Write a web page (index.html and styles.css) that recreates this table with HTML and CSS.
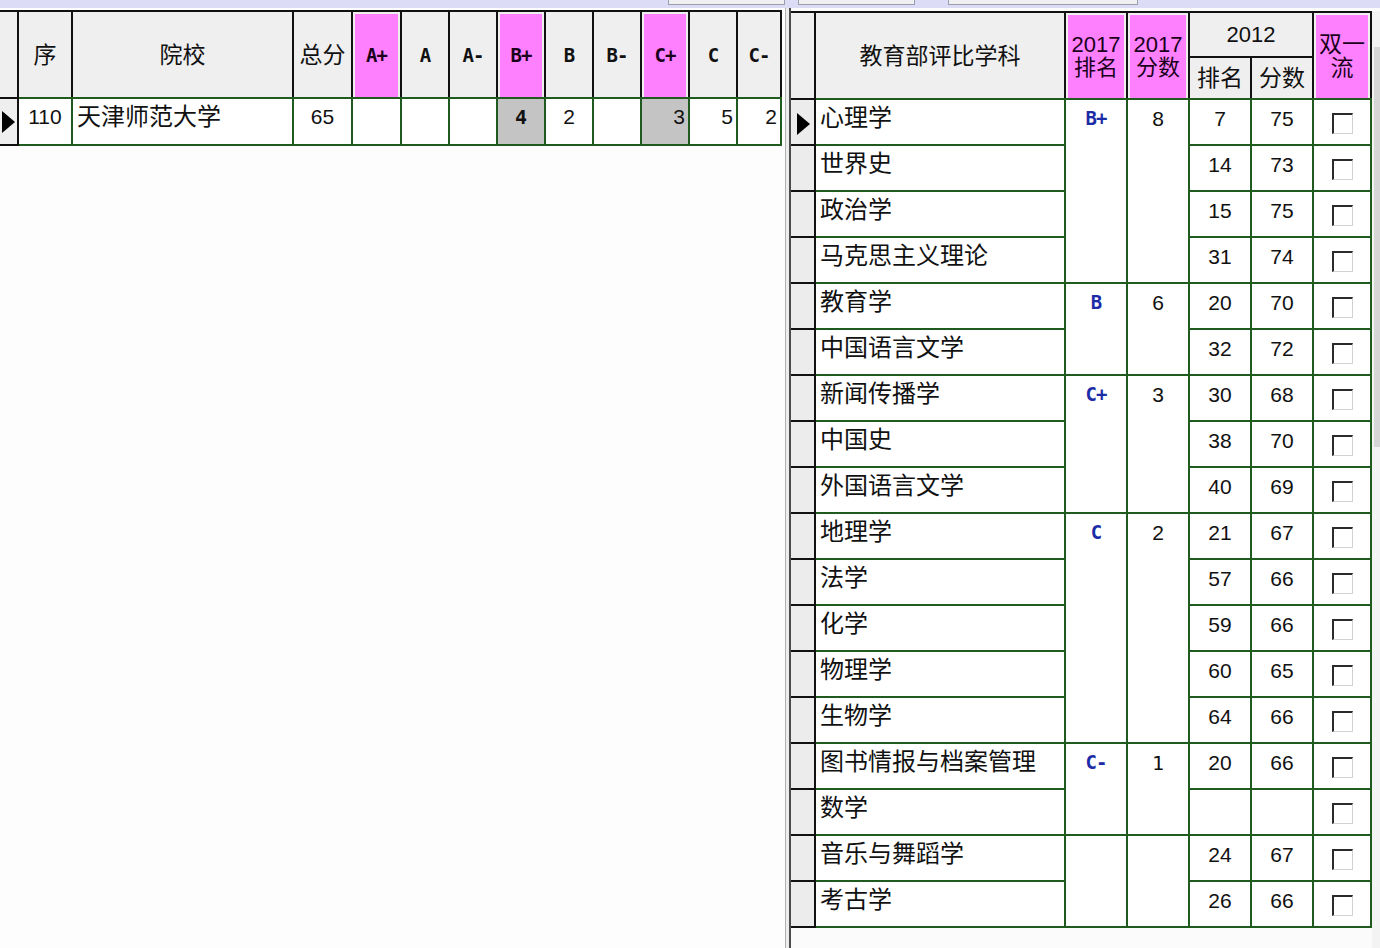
FILE: index.html
```html
<!DOCTYPE html>
<html lang="zh-CN">
<head>
<meta charset="utf-8">
<title>学科评估</title>
<link rel="stylesheet" href="styles.css">
</head>
<body>
<div class="topbar">
  <div class="tab t1"></div>
  <div class="tab t2"></div>
  <div class="tab t3"></div>
</div>
<div class="main">
  <div class="lpane">
    <div class="lhead">
      <div class="hc"></div>
      <div class="hc">序</div>
      <div class="hc">院校</div>
      <div class="hc">总分</div>
      <div class="hc pk g">A+</div>
      <div class="hc g">A</div>
      <div class="hc g">A-</div>
      <div class="hc pk g">B+</div>
      <div class="hc g">B</div>
      <div class="hc g">B-</div>
      <div class="hc pk g">C+</div>
      <div class="hc g">C</div>
      <div class="hc g">C-</div>
    </div>
    <div class="lbody">
      <div class="lind"><svg class="arrow" width="13" height="22" viewBox="0 0 13 22"><polygon points="0,0 13,11 0,22" fill="#000"/></svg></div>
      <div class="lrow">
        <div class="dc num c">110</div>
        <div class="dc txt">天津师范大学</div>
        <div class="dc num c">65</div>
        <div class="dc"></div>
        <div class="dc"></div>
        <div class="dc"></div>
        <div class="dc num c gray mono b">4</div>
        <div class="dc num c">2</div>
        <div class="dc"></div>
        <div class="dc num r gray">3</div>
        <div class="dc num r">5</div>
        <div class="dc num r">2</div>
      </div>
    </div>
  </div>
  <div class="splitter"></div>
  <div class="rpane">
    <div class="rmain">
      <div class="rhead">
        <div class="hc sp2"></div>
        <div class="hc sp2">教育部评比学科</div>
        <div class="hc pk sp2 yr">2017<br>排名</div>
        <div class="hc pk sp2 yr">2017<br>分数</div>
        <div class="hc cs2 yr">2012</div>
        <div class="hc pk sp2">双一流</div>
        <div class="hc">排名</div>
        <div class="hc">分数</div>
      </div>
      <div class="rbody">
        <div class="rind">
          <div class="ri"><svg class="arrow" width="13" height="22" viewBox="0 0 13 22"><polygon points="0,0 13,11 0,22" fill="#000"/></svg></div>
          <div class="ri"></div><div class="ri"></div><div class="ri"></div>
          <div class="ri"></div><div class="ri"></div><div class="ri"></div>
          <div class="ri"></div><div class="ri"></div><div class="ri"></div>
          <div class="ri"></div><div class="ri"></div><div class="ri"></div>
          <div class="ri"></div><div class="ri"></div><div class="ri"></div>
          <div class="ri"></div><div class="ri"></div>
        </div>
        <div class="rgrid">
          <div class="dc txt">心理学</div>
          <div class="dc grade s4">B+</div>
          <div class="dc num c s4">8</div>
          <div class="dc num c">7</div>
          <div class="dc num c">75</div>
          <div class="dc cbc"><span class="cb"></span></div>

          <div class="dc txt">世界史</div>
          <div class="dc num c">14</div>
          <div class="dc num c">73</div>
          <div class="dc cbc"><span class="cb"></span></div>

          <div class="dc txt">政治学</div>
          <div class="dc num c">15</div>
          <div class="dc num c">75</div>
          <div class="dc cbc"><span class="cb"></span></div>

          <div class="dc txt">马克思主义理论</div>
          <div class="dc num c">31</div>
          <div class="dc num c">74</div>
          <div class="dc cbc"><span class="cb"></span></div>

          <div class="dc txt">教育学</div>
          <div class="dc grade s2">B</div>
          <div class="dc num c s2">6</div>
          <div class="dc num c">20</div>
          <div class="dc num c">70</div>
          <div class="dc cbc"><span class="cb"></span></div>

          <div class="dc txt">中国语言文学</div>
          <div class="dc num c">32</div>
          <div class="dc num c">72</div>
          <div class="dc cbc"><span class="cb"></span></div>

          <div class="dc txt">新闻传播学</div>
          <div class="dc grade s3">C+</div>
          <div class="dc num c s3">3</div>
          <div class="dc num c">30</div>
          <div class="dc num c">68</div>
          <div class="dc cbc"><span class="cb"></span></div>

          <div class="dc txt">中国史</div>
          <div class="dc num c">38</div>
          <div class="dc num c">70</div>
          <div class="dc cbc"><span class="cb"></span></div>

          <div class="dc txt">外国语言文学</div>
          <div class="dc num c">40</div>
          <div class="dc num c">69</div>
          <div class="dc cbc"><span class="cb"></span></div>

          <div class="dc txt">地理学</div>
          <div class="dc grade s5">C</div>
          <div class="dc num c s5">2</div>
          <div class="dc num c">21</div>
          <div class="dc num c">67</div>
          <div class="dc cbc"><span class="cb"></span></div>

          <div class="dc txt">法学</div>
          <div class="dc num c">57</div>
          <div class="dc num c">66</div>
          <div class="dc cbc"><span class="cb"></span></div>

          <div class="dc txt">化学</div>
          <div class="dc num c">59</div>
          <div class="dc num c">66</div>
          <div class="dc cbc"><span class="cb"></span></div>

          <div class="dc txt">物理学</div>
          <div class="dc num c">60</div>
          <div class="dc num c">65</div>
          <div class="dc cbc"><span class="cb"></span></div>

          <div class="dc txt">生物学</div>
          <div class="dc num c">64</div>
          <div class="dc num c">66</div>
          <div class="dc cbc"><span class="cb"></span></div>

          <div class="dc txt">图书情报与档案管理</div>
          <div class="dc grade s2">C-</div>
          <div class="dc num c s2 mono">1</div>
          <div class="dc num c">20</div>
          <div class="dc num c">66</div>
          <div class="dc cbc"><span class="cb"></span></div>

          <div class="dc txt">数学</div>
          <div class="dc num c"></div>
          <div class="dc num c"></div>
          <div class="dc cbc"><span class="cb"></span></div>

          <div class="dc txt">音乐与舞蹈学</div>
          <div class="dc grade s2"></div>
          <div class="dc num c s2"></div>
          <div class="dc num c">24</div>
          <div class="dc num c">67</div>
          <div class="dc cbc"><span class="cb"></span></div>

          <div class="dc txt">考古学</div>
          <div class="dc num c">26</div>
          <div class="dc num c">66</div>
          <div class="dc cbc"><span class="cb"></span></div>
        </div>
      </div>
    </div>
    <div class="vscroll"><div class="thumb"></div></div>
  </div>
</div>
</body>
</html>
```

FILE: styles.css
```css
* { box-sizing: border-box; }
html, body { margin: 0; padding: 0; }
body {
  width: 1380px;
  height: 948px;
  overflow: hidden;
  background: #fcfcfc;
  color: #111;
  font-family: "Liberation Sans", "Noto Sans CJK SC", sans-serif;
}

/* top strip */
.topbar {
  height: 8px;
  background: #dcdcf6;
  display: flex;
  align-items: flex-start;
}
.tab {
  height: 5px;
  background: #f0f0f3;
  border: 1px solid #9c9cac;
  border-top: 0;
}
.t1 { margin-left: 668px; width: 117px; }
.t2 { margin-left: 13px; width: 117px; }
.t3 { margin-left: 33px; width: 190px; }

.main { display: flex; height: 940px; }

/* left pane */
.lpane {
  width: 786px;
  padding-top: 2px;
  background: #fdfdfd;
  border-right: 1px solid #b0b0b0;
}
.splitter { width: 3px; background: #ececec; }

.lhead {
  width: 782px;
  display: grid;
  grid-template-columns: 17px 52px 219px 57px 47px repeat(7, 46px) 42px;
  grid-template-rows: 85px;
  gap: 2px;
  padding: 2px 2px 0 0;
  background: #111;
}
.hc {
  background: #efefef;
  display: flex;
  align-items: center;
  justify-content: center;
  text-align: center;
  font-size: 23px;
  line-height: 24px;
  color: #111;
}
.pk {
  background: #ff80ff;
  box-shadow: inset 2px 2px 0 #efefef, inset -2px 0 0 #efefef;
  color: #1a001a;
}
.g {
  font-family: "DejaVu Sans Mono", monospace;
  font-weight: bold;
  font-size: 19px;
  letter-spacing: -1px;
}
.yr { font-size: 22px; line-height: 23px; }

.lbody { display: flex; }
.lind {
  width: 19px;
  height: 49px;
  background: #efefef;
  border-top: 2px solid #111;
  border-bottom: 2px solid #111;
  border-right: 2px solid #111;
  display: flex;
  align-items: center;
  padding-left: 2px;
}
.lrow {
  width: 763px;
  display: grid;
  grid-template-columns: 52px 219px 57px 47px repeat(7, 46px) 42px;
  grid-template-rows: 45px;
  gap: 2px;
  padding: 2px 2px 2px 0;
  background: #1f5a1f;
}

/* cells */
.dc {
  background: #fff;
  font-size: 21px;
  line-height: 28px;
  padding-top: 4px;
  white-space: nowrap;
  overflow: hidden;
}
.txt { font-size: 24px; padding-left: 4px; }
.num { padding-top: 4px; }
.c { text-align: center; }
.r { text-align: right; padding-right: 3px; }
.gray { background: #c4c4c4; }
.mono { font-family: "DejaVu Sans Mono", monospace; font-size: 20px; }
.b { font-weight: bold; }

/* right pane */
.rpane {
  flex: 1;
  display: flex;
  border-left: 2px solid #4c4c4c;
  padding-top: 3px;
  background: #fbfbfb;
}
.rmain { width: 581px; }
.rhead {
  display: grid;
  grid-template-columns: 23px 248px 60px 60px 60px 60px 56px;
  grid-template-rows: 43px 40px;
  gap: 2px;
  padding: 2px 2px 0 0;
  background: #111;
}
.sp2 { grid-row: span 2; }
.cs2 { grid-column: span 2; }

.rbody { display: flex; }
.rind {
  width: 25px;
  display: flex;
  flex-direction: column;
  gap: 2px;
  padding: 2px 2px 2px 0;
  background: #111;
}
.ri {
  height: 44px;
  background: #ececec;
  display: flex;
  align-items: flex-start;
  padding: 13px 0 0 6px;
}
.rgrid {
  width: 556px;
  display: grid;
  grid-template-columns: 248px 60px 60px 60px 60px 56px;
  grid-auto-rows: 44px;
  gap: 2px;
  padding: 2px 2px 2px 0;
  background: #1f5a1f;
}
.rgrid .num { padding-top: 5px; }
.s2 { grid-row: span 2; }
.s3 { grid-row: span 3; }
.s4 { grid-row: span 4; }
.s5 { grid-row: span 5; }
.grade {
  text-align: center;
  font-family: "DejaVu Sans Mono", monospace;
  font-weight: bold;
  font-size: 19px;
  letter-spacing: -1px;
  color: #1c2ca6;
  padding-top: 4px;
}
.cbc {
  display: flex;
  justify-content: center;
  padding-top: 13px;
}
.cb {
  display: block;
  width: 21px;
  height: 21px;
  background: #fff;
  border-style: solid;
  border-width: 2px 1px 1px 2px;
  border-color: #2b2b2b #d2d2d2 #d2d2d2 #2b2b2b;
}

.vscroll {
  flex: 1;
  background: #f3f3f3;
  padding-top: 36px;
  display: flex;
  justify-content: flex-end;
}
.thumb {
  width: 6px;
  height: 400px;
  background: #d6d6d6;
}
.arrow { display: block; }
```
